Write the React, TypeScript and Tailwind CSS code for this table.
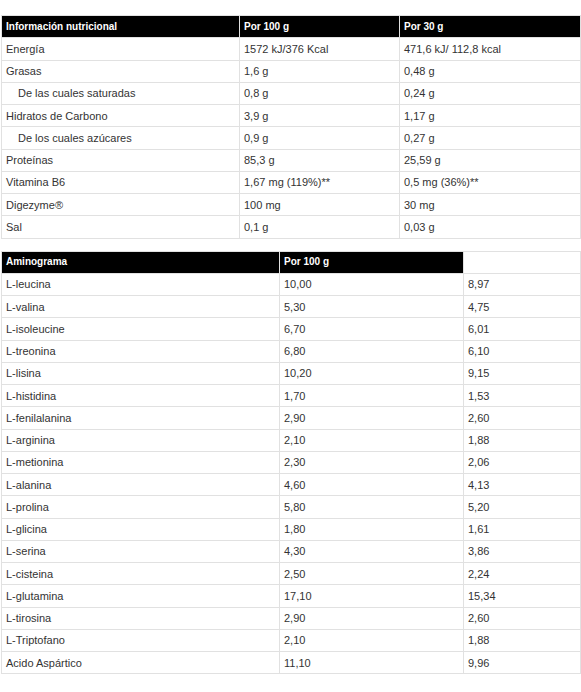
import React from 'react';

const nutrition: [string, string, string, boolean?][] = [
  ['Energía', '1572 kJ/376 Kcal', '471,6 kJ/ 112,8 kcal'],
  ['Grasas', '1,6 g', '0,48 g'],
  ['De las cuales saturadas', '0,8 g', '0,24 g', true],
  ['Hidratos de Carbono', '3,9 g', '1,17 g'],
  ['De los cuales azúcares', '0,9 g', '0,27 g', true],
  ['Proteínas', '85,3 g', '25,59 g'],
  ['Vitamina B6', '1,67 mg (119%)**', '0,5 mg (36%)**'],
  ['Digezyme®', '100 mg', '30 mg'],
  ['Sal', '0,1 g', '0,03 g'],
];

const aminos: [string, string, string][] = [
  ['L-leucina', '10,00', '8,97'],
  ['L-valina', '5,30', '4,75'],
  ['L-isoleucine', '6,70', '6,01'],
  ['L-treonina', '6,80', '6,10'],
  ['L-lisina', '10,20', '9,15'],
  ['L-histidina', '1,70', '1,53'],
  ['L-fenilalanina', '2,90', '2,60'],
  ['L-arginina', '2,10', '1,88'],
  ['L-metionina', '2,30', '2,06'],
  ['L-alanina', '4,60', '4,13'],
  ['L-prolina', '5,80', '5,20'],
  ['L-glicina', '1,80', '1,61'],
  ['L-serina', '4,30', '3,86'],
  ['L-cisteina', '2,50', '2,24'],
  ['L-glutamina', '17,10', '15,34'],
  ['L-tirosina', '2,90', '2,60'],
  ['L-Triptofano', '2,10', '1,88'],
  ['Acido Aspártico', '11,10', '9,96'],
];

// shared cell styles
const cell = 'border border-[#e1e1e1] px-[4px] h-[22.25px] leading-[14px] align-middle text-left';
const head = 'border border-[#e1e1e1] bg-black text-white text-[10px] px-[4px] h-[22.25px] leading-[14px] align-middle text-left font-bold';

export default function App() {
  return (
    <div className="bg-white text-[#333] text-[11px] pt-[15px] pl-[1px]" style={{ fontFamily: '"Liberation Sans", Arial, sans-serif' }}>
      <table className="w-[580px] table-fixed border-collapse">
        <colgroup>
          <col className="w-[238px]" />
          <col className="w-[160px]" />
          <col />
        </colgroup>
        <thead>
          <tr>
            <th className={head}>Información nutricional</th>
            <th className={head}>Por 100 g</th>
            <th className={head}>Por 30 g</th>
          </tr>
        </thead>
        <tbody>
          {nutrition.map(([name, a, b, sub]) => (
            <tr key={name}>
              <td className={cell}>
                <span className={sub ? 'pl-[12px]' : ''}>{name}</span>
              </td>
              <td className={cell}>{a}</td>
              <td className={cell}>{b}</td>
            </tr>
          ))}
        </tbody>
      </table>

      <table className="w-[580px] table-fixed border-collapse mt-[12px]">
        <colgroup>
          <col className="w-[278px]" />
          <col className="w-[184px]" />
          <col />
        </colgroup>
        <thead>
          <tr>
            <th className={head}>Aminograma</th>
            <th className={head}>Por 100 g</th>
            <th className={cell}></th>
          </tr>
        </thead>
        <tbody>
          {aminos.map(([name, a, b]) => (
            <tr key={name}>
              <td className={cell}>{name}</td>
              <td className={cell}>{a}</td>
              <td className={cell}>{b}</td>
            </tr>
          ))}
        </tbody>
      </table>
    </div>
  );
}
